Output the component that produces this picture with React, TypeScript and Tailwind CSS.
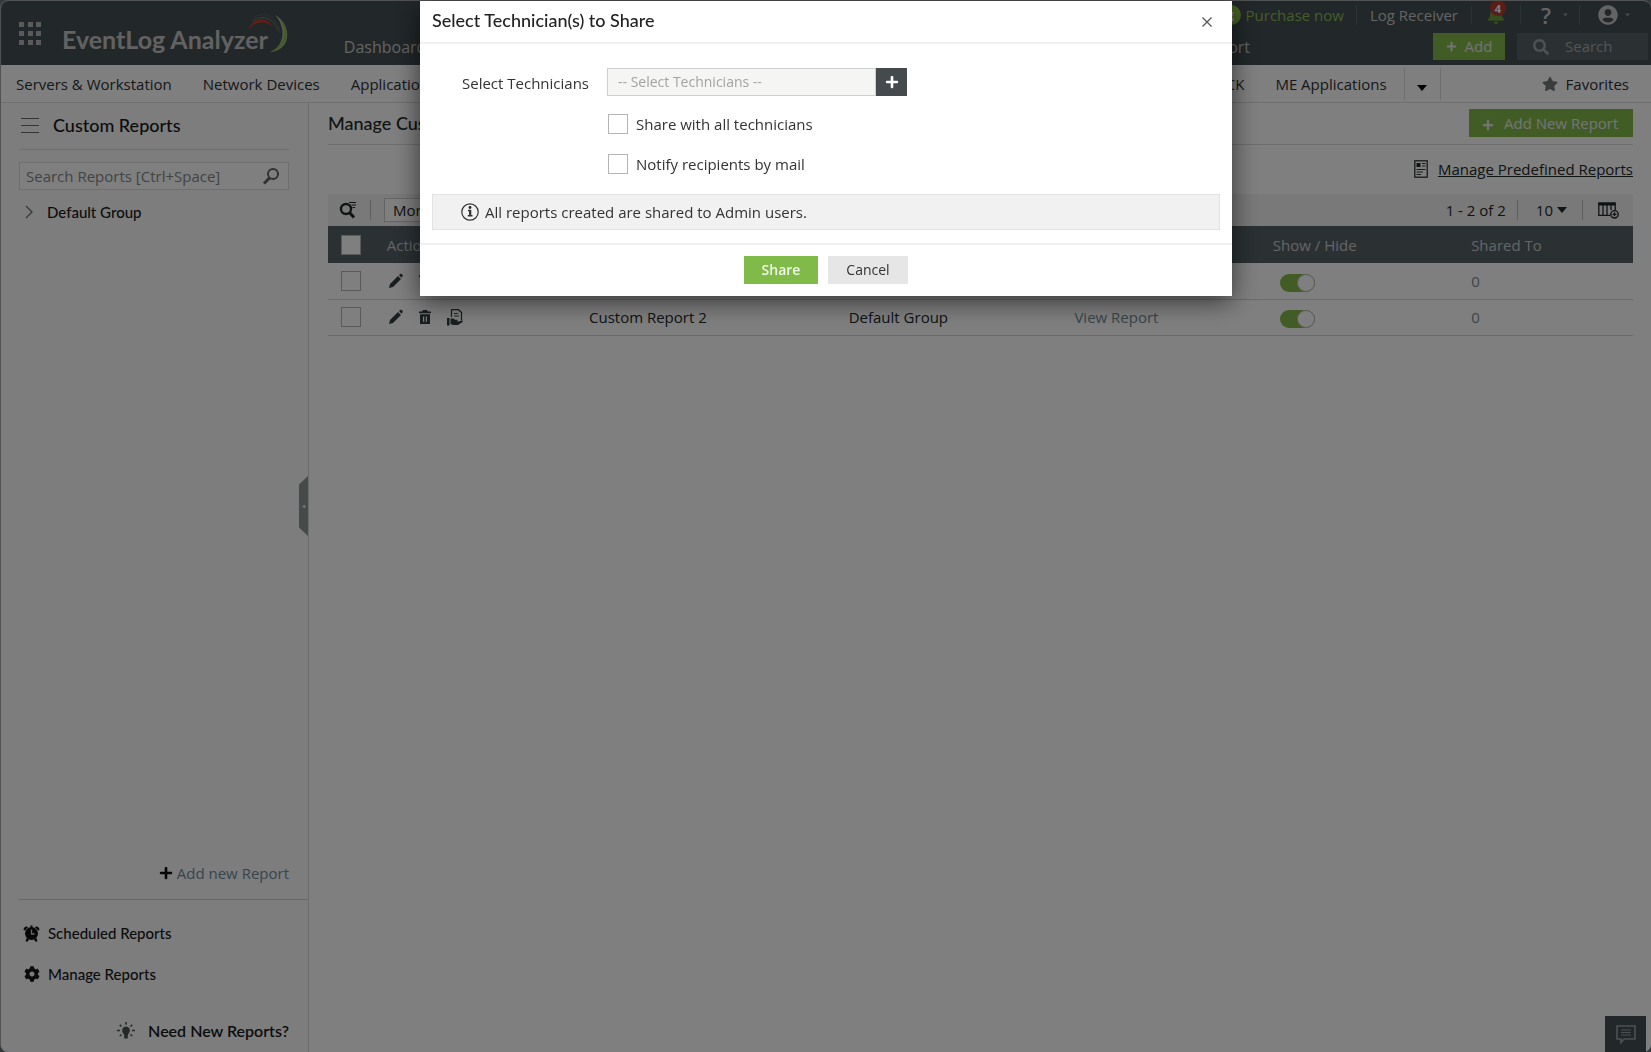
import React from "react";
import { FaBell, FaCog, FaPlus, FaSearch, FaStar, FaUserCircle } from "react-icons/fa";

const GridIcon = () => (
  <svg width="24" height="26" viewBox="0 0 24 26" fill="#b4b4b4">
    {[1, 10, 18].map((x) => [1, 10, 19].map((y) => <rect key={`${x}-${y}`} x={x} y={y} width="5" height="5" />))}
  </svg>
);

const LogoArc = () => (
  <svg width="44" height="44" viewBox="0 0 44 44" fill="none">
    <path d="M2 19C7 6 20 4 27 16C20 9 9 10 2 19Z" fill="#b8402c" />
    <path d="M7 10C14 4 26 5 32 19" stroke="#8b9a6a" strokeDasharray="1.500 1" />
    <path d="M7 7C17 0 30 3 34 22" stroke="#5c686c" />
    <path d="M29 4C47 14 45 40 24 41C38 36 41 17 29 4Z" fill="#a9b894" />
    <path d="M35 9C47 23 38 39 24 41C38 35 42 23 35 9Z" fill="#84b944" />
  </svg>
);

const Magnifier = () => (
  <svg width="18" height="18" viewBox="0 0 18 18" fill="none" stroke="#5f6465" strokeWidth="2">
    <circle cx="11" cy="7" r="5" />
    <path d="M7.500 11L2 16.500" strokeWidth="3" />
  </svg>
);

const FilterSearch = () => (
  <svg width="18" height="18" viewBox="0 0 18 18" fill="none" stroke="#22282a">
    <circle cx="7" cy="8" r="5" strokeWidth="2.400" />
    <path d="M10.500 11.500L15 16.500" strokeWidth="3" />
    <path d="M10 1.500H17M12.500 4H17M13.500 6.500H16" strokeWidth="1.200" />
  </svg>
);

const Pencil = () => (
  <svg width="14" height="16" viewBox="0 0 14 16" fill="#333c40">
    <path d="M0 15L1 11L9 3L12 6L4 14Z" />
    <path d="M10 2L11.500 0.800Q12.300 0.500 13 1.200L13.700 2Q14 2.700 13.500 3.300L12.500 4.800Z" />
  </svg>
);

const Trash = () => (
  <svg width="12" height="14" viewBox="0 0 12 14" fill="#333c40">
    <path d="M4 0H8L9 1.500H12V3.200H0V1.500H3Z" />
    <path fillRule="evenodd" d="M1 4.300H11V14H1ZM4 6.500V11.800H5.200V6.500ZM6.800 6.500V11.800H8V6.500Z" />
  </svg>
);

const ShareDoc = () => (
  <svg width="17" height="17" viewBox="0 0 17 17" fill="none" stroke="#333c40">
    <path d="M4.500 8V0.700H11.500L14.500 3.500V11.500" strokeWidth="1.300" />
    <path d="M7 4.500H11M7 7H12" strokeWidth="1.200" />
    <path d="M0 9H2.500V16.500H0Z" fill="#333c40" stroke="none" />
    <path d="M3.500 9.500H6.500L8 10.800H10.500V12.500H8H11.500L15 11.500Q16.500 11.600 15.500 13L11 16H6L3.500 15Z" fill="#333c40" stroke="none" />
  </svg>
);

const NewsDoc = () => (
  <svg width="14" height="18" viewBox="0 0 14 18" fill="none" stroke="#30383b">
    <rect x="0.800" y="0.800" width="12.400" height="16.400" strokeWidth="1.300" />
    <rect x="2.500" y="3" width="4" height="4" fill="#22282a" stroke="none" />
    <path d="M8 3.500H11.500M8 6H11.500M2.500 9.500H11.500M2.500 12H9M2.500 14.500H7" strokeWidth="1.200" />
  </svg>
);

const ColumnsAdd = () => (
  <svg width="21" height="17" viewBox="0 0 21 17" fill="none" stroke="#22282a">
    <path d="M12 13.300H0.800V1H17.200V8M5 3V13M9 3V13M13 3V8" strokeWidth="1.300" />
    <path d="M0.500 2.200H17.500" strokeWidth="2.500" />
    <circle cx="16.500" cy="12.300" r="3.700" strokeWidth="1.400" />
    <path d="M16.500 10.300V14.300M14.500 12.300H18.500" strokeWidth="1.300" />
  </svg>
);

const AlarmClock = () => (
  <svg width="17" height="17" viewBox="0 0 17 17" fill="#111">
    <path d="M4 1.500Q1 1 0.500 5L2 5.500Q3 4 5 2.500ZM13 1.500Q16 1 16.500 5L15 5.500Q14 4 12 2.500Z" />
    <circle cx="8.500" cy="8.500" r="6.500" />
    <path d="M7.500 0.500H9.500V2.500H7.500ZM3.500 13L2.500 16.500H5L6 14ZM13.500 13L14.500 16.500H12L11 14Z" />
    <path d="M8.500 4.500V9H11.500" stroke="#d0d0d0" strokeWidth="1.300" fill="none" />
  </svg>
);

const Bulb = () => (
  <svg width="18" height="18" viewBox="0 0 18 18" fill="#4a5356">
    <path d="M9 4.500A4 4 0 0 1 12 11L10.800 13V16.500H7.200V13L6 11A4 4 0 0 1 9 4.500Z" />
    <path d="M9 0V2.500M2.800 2.800L4.500 4.500M15.200 2.800L13.500 4.500M0 8.500H3M15 8.500H18M2.800 14L4.500 12.500M15.200 14L13.500 12.500" stroke="#4a5356" strokeWidth="1.600" />
  </svg>
);

const ChatIcon = () => (
  <svg width="20" height="19" viewBox="0 0 20 19" fill="none" stroke="#9aa2a5" strokeWidth="1.600">
    <path d="M1 1H19V14H8L5 17.500V14H1Z" />
    <path d="M5 5H15M5 7.500H15M5 10H15" strokeWidth="1.200" />
  </svg>
);

const InfoIcon = () => (
  <svg width="18" height="18" viewBox="0 0 18 18" fill="none" stroke="#333">
    <circle cx="9" cy="9" r="8.200" strokeWidth="1.200" />
    <path d="M7 7.500H9.200V12.500M6.800 12.800H11.500" strokeWidth="1.500" />
    <path d="M9.200 7V13" strokeWidth="2.200" />
    <circle cx="9" cy="4.500" r="1.400" fill="#222" stroke="none" />
  </svg>
);

const Caret = ({ className = "" }: { className?: string }) => (
  <svg className={className} width="10" height="6" viewBox="0 0 10 6" fill="currentColor">
    <path d="M0 0H10L5 6Z" />
  </svg>
);

const checkbox = "size-5 shrink-0 appearance-none border border-[#b5b5b5] bg-white";
const heading = "font-['Lato',sans-serif] font-medium";

function Header() {
  return (
    <header className="flex h-16 items-stretch bg-[#444f54] text-[#c9c9c9]">
      <button aria-label="Apps" className="ml-[17px] mt-5 self-start"><GridIcon /></button>
      <div className="ml-5 flex items-start">
        <span className="mt-[22px] whitespace-nowrap font-['Lato',sans-serif] text-[25px] leading-8 font-bold text-[#c4c4c4]">EventLog Analyzer</span>
        <div className="-ml-[22px] mt-[10px]"><LogoArc /></div>
      </div>
      <nav className="ml-[54px] flex flex-1 items-end justify-between pb-[6px] text-base leading-6">
        <a href="#dashboard">Dashboard</a>
        <a href="#support">Support</a>
      </nav>
      <div className="flex w-[401px] flex-col justify-between pb-[5px] pr-[3px]">
        <div className="flex h-7 items-center justify-end whitespace-nowrap text-[15px] leading-5 *:shrink-0">
          <a href="#purchase" className="mr-3 flex items-center gap-[5px] text-[#8cba52]">
            <span className="flex size-5 items-center justify-center rounded-full bg-[#8cc34a] text-xs font-bold text-white">g</span>
            Purchase now
          </a>
          <a href="#receiver" className="border-l border-[#59666b] px-[13px]">Log Receiver</a>
          <button aria-label="Notifications" className="relative border-l border-[#59666b] pl-[15px] pr-[15px]">
            <FaBell className="text-lg text-[#6f9a3b]" />
            <span className="absolute -top-[6px] left-[18px] flex size-4 items-center justify-center rounded-full bg-[#b23c30] text-[11px] leading-none font-bold text-white">4</span>
          </button>
          <button aria-label="Help" className="flex items-center gap-3 border-l border-[#59666b] pl-5 pr-[11px] text-[22px] leading-5 font-semibold">?<Caret className="w-[5px] text-[#8b9599]" /></button>
          <button aria-label="Account" className="flex items-center gap-[7px] border-l border-[#59666b] pl-[18px] pr-[18px]"><FaUserCircle className="text-xl" /><Caret className="w-[5px] text-[#8b9599]" /></button>
        </div>
        <div className="flex justify-end gap-3">
          <button className="flex h-[27px] w-[72px] items-center justify-center gap-2 bg-[#82ba4b] text-[15px] text-[#e6e6e6]"><FaPlus className="text-[11px]" />Add</button>
          <label className="flex h-[27px] w-[131px] items-center gap-4 bg-[#566166] pl-4">
            <FaSearch className="shrink-0 text-base text-[#9aa2a5]" />
            <input aria-label="Search" placeholder="Search" className="w-full bg-transparent text-[15px] outline-none placeholder:text-[#a5abad]" />
          </label>
        </div>
      </div>
    </header>
  );
}

function SubNav() {
  return (
    <nav className="flex h-[38px] items-center border-b border-[#dcdcdc] pl-[15px] text-[15px] leading-5 text-[#2b3234]">
      <div className="flex flex-1 gap-[31px] whitespace-nowrap">
        <a href="#servers">Servers &amp; Workstation</a>
        <a href="#network">Network Devices</a>
        <a href="#applications">Applications</a>
      </div>
      <a href="#attack" className="mr-[31px]">MITRE ATT&amp;CK</a>
      <a href="#me">ME Applications</a>
      <button aria-label="More report types" className="ml-[17px] mr-[101px] flex h-8 w-[37px] items-center justify-center border-x border-[#dcdcdc] pt-2 text-black"><Caret /></button>
      <button className="mr-[22px] flex items-center gap-2"><FaStar className="text-base text-[#747a7c]" />Favorites</button>
    </nav>
  );
}

function Sidebar() {
  return (
    <aside className="relative flex w-[308px] shrink-0 flex-col border-r border-[#d9d9d9] bg-[#fafafa] pl-[18px] text-[15px] leading-5 text-[#16191a]">
      <div className="mr-[19px] flex h-[47px] items-center gap-[14px] border-b border-[#dfdfdf] pb-[2px]">
        <button aria-label="Menu" className="ml-[2px] flex h-[15px] w-[18px] flex-col justify-between *:h-px *:bg-[#666b6d]"><span /><span /><span /></button>
        <h2 className={`${heading} text-lg`}>Custom Reports</h2>
      </div>
      <label className="mr-[19px] mt-3 flex h-7 items-center border border-[#dedede] bg-white pl-[6px] pr-2">
        <input aria-label="Search Reports" placeholder="Search Reports [Ctrl+Space]" className="min-w-0 flex-1 bg-transparent outline-none placeholder:text-[#838889]" />
        <Magnifier />
      </label>
      <button className="mt-3 flex items-center gap-[14px] pl-[6px]">
        <svg width="8" height="14" viewBox="0 0 8 14" fill="none" stroke="#6b7072" strokeWidth="1.300"><path d="M1 1L7 7L1 13" /></svg>
        <span className={heading}>Default Group</span>
      </button>
      <button aria-label="Collapse sidebar" className="absolute right-0 top-[373px] flex h-[60px] w-[9px] items-center justify-center bg-[#8f9496] text-[6px] text-white [clip-path:polygon(100%_0,0_14%,0_86%,100%_100%)]">◂</button>
      <a href="#new" className="mr-[19px] mt-auto flex items-center justify-end gap-1 text-[#6e8c99]"><FaPlus className="text-sm text-[#111]" />Add new Report</a>
      <div className="mt-4 border-t border-[#cfcfcf] pt-[23px]">
        <a href="#scheduled" className={`${heading} flex items-center gap-2 pl-1`}><AlarmClock />Scheduled Reports</a>
        <a href="#manage" className={`${heading} mt-[21px] flex items-center gap-2 pl-[5px]`}><FaCog className="text-base" />Manage Reports</a>
        <a href="#need" className="mr-[19px] mb-[11px] mt-[37px] flex items-center justify-end gap-[13px] font-['Lato',sans-serif] text-base leading-5 font-semibold"><Bulb />Need New Reports?</a>
      </div>
    </aside>
  );
}

function Reports() {
  return (
    <main className="min-w-0 flex-1 bg-white pl-[19px] pr-[18px] text-[15px] leading-5 text-[#222829]">
      <div className="flex h-[42px] items-center justify-between border-b border-[#dcdcdc] pb-[2px]">
        <h1 className={`${heading} text-lg`}>Manage Custom Reports</h1>
        <button className="flex h-7 w-[164px] items-center gap-[10px] bg-[#82ba4b] pl-[13px] text-[#e9e9e9]"><FaPlus className="mt-1 text-xs" />Add New Report</button>
      </div>
      <div className="flex h-[49px] items-center justify-end gap-[10px] pb-[2px]">
        <NewsDoc />
        <a href="#predefined" className="underline">Manage Predefined Reports</a>
      </div>
      <div className="flex h-8 items-center bg-[#f2f2f2] pl-[11px]">
        <button aria-label="Filter"><FilterSearch /></button>
        <span className="mx-[13px] h-5 w-px bg-[#bdbdbd]" />
        <select aria-label="More actions" className="h-6 w-[120px] appearance-none border border-[#c9c9c9] bg-white px-2"><option>More</option></select>
        <span className="ml-auto">1 - 2 of 2</span>
        <span className="ml-[11px] mr-3 h-5 w-px bg-[#bdbdbd]" />
        <button className="flex items-center gap-1 pl-[6px]">10<Caret /></button>
        <span className="mx-[15px] h-5 w-px bg-[#bdbdbd]" />
        <button aria-label="Choose columns" className="mr-[14px]"><ColumnsAdd /></button>
      </div>
      <table className="w-full table-fixed text-left">
        <colgroup>
          <col className="w-[4.500%]" /><col className="w-[15.500%]" /><col className="w-[19.900%]" /><col className="w-[17.300%]" /><col className="w-[15.200%]" /><col className="w-[15.200%]" /><col />
        </colgroup>
        <thead>
          <tr className="h-[37px] bg-[#566266] text-[#c8cbcc] [&_th]:font-normal">
            <th className="pl-[13px]"><input type="checkbox" aria-label="Select all" className={`${checkbox} block`} /></th>
            <th>Actions</th><th>Report Name</th><th>Report Group</th><th>View</th><th>Show / Hide</th><th>Shared To</th>
          </tr>
        </thead>
        <tbody>
          {["Custom Report 1", "Custom Report 2"].map((name) => (
            <tr key={name} className="h-[36px] border-b border-[#d6d6d6]">
              <td className="pl-[13px]"><input type="checkbox" aria-label={`Select ${name}`} className={`${checkbox} block`} /></td>
              <td>
                <div className="flex items-center gap-4 pl-[2px]">
                  <button aria-label="Edit"><Pencil /></button>
                  <button aria-label="Delete"><Trash /></button>
                  <button aria-label="Share"><ShareDoc /></button>
                </div>
              </td>
              <td>{name}</td>
              <td>Default Group</td>
              <td><a href="#view" className="text-[#6e8c99]">View Report</a></td>
              <td>
                <input type="checkbox" role="switch" defaultChecked aria-label={`Show ${name}`} className="relative ml-[7px] mt-1 block h-[18px] w-[35px] appearance-none rounded-full bg-[#82ba4b] after:absolute after:right-0 after:top-0 after:size-[18px] after:rounded-full after:border after:border-[#bdbdbd] after:bg-white after:content-['']" />
              </td>
              <td><a href="#shared" className="text-[#6e8c99]">0</a></td>
            </tr>
          ))}
        </tbody>
      </table>
    </main>
  );
}

function ShareDialog() {
  return (
    <div className="fixed inset-0 flex items-start justify-center bg-black/50 pl-px pt-px">
      <div role="dialog" aria-labelledby="share-title" className="w-[812px] max-w-full bg-white text-[15px] leading-5 text-[#333] shadow-[0_5px_24px_rgba(0,0,0,0.6)]">
        <div className="flex h-[43px] items-center justify-between border-b-2 border-[#f0f0f0] pb-1 pl-3 pr-[19px]">
          <h2 id="share-title" className={`${heading} text-lg text-[#222]`}>Select Technician(s) to Share</h2>
          <button aria-label="Close" className="pt-1"><svg width="12" height="12" viewBox="0 0 12 12" stroke="#555" strokeWidth="1.300"><path d="M1.500 1.500L10.500 10.500M10.500 1.500L1.500 10.500" /></svg></button>
        </div>
        <div className="px-3 pb-[13px] pt-6">
          <div className="flex items-start">
            <label htmlFor="technicians" className="w-[175px] pl-[30px] pt-[5px]">Select Technicians</label>
            <input id="technicians" placeholder="-- Select Technicians --" className="h-[28px] w-[269px] border border-[#cfcfcf] bg-[#f5f5f3] px-[10px] pb-[2px] text-sm outline-none placeholder:text-[#a3a3a3]" />
            <button aria-label="Add technicians" className="flex h-[28px] w-[31px] items-center justify-center bg-[#454a4c] text-sm text-white"><FaPlus /></button>
          </div>
          <div className="ml-[176px] mt-[18px] flex flex-col items-start gap-5">
            <label className="flex items-center gap-2"><input type="checkbox" className={checkbox} />Share with all technicians</label>
            <label className="flex items-center gap-2"><input type="checkbox" className={checkbox} />Notify recipients by mail</label>
          </div>
          <p className="mt-5 flex h-9 items-center gap-[6px] border border-[#e2e2e2] bg-[#f1f1f1] pl-7"><InfoIcon />All reports created are shared to Admin users.</p>
        </div>
        <div className="flex h-[53px] items-center justify-center gap-[10px] border-t-2 border-[#f0f0f0] pb-px">
          <button className="h-7 w-[74px] bg-[#80bb4a] text-sm font-semibold text-[#eef8e2]">Share</button>
          <button className="h-7 w-20 bg-[#e6e6e6] text-sm">Cancel</button>
        </div>
      </div>
    </div>
  );
}

export default function App() {
  return (
    <div className="flex min-h-screen flex-col bg-[#6c7376] font-['Open_Sans',sans-serif]">
      <div className="flex flex-1 flex-col overflow-hidden rounded-lg border-l border-t border-[#a0a5a7] bg-white">
        <Header />
        <SubNav />
        <div className="flex flex-1">
          <Sidebar />
          <Reports />
        </div>
      </div>
      <button aria-label="Open chat" className="fixed bottom-0 right-[5px] flex h-9 w-[41px] items-center justify-center bg-[#444f54]"><ChatIcon /></button>
      <ShareDialog />
    </div>
  );
}
